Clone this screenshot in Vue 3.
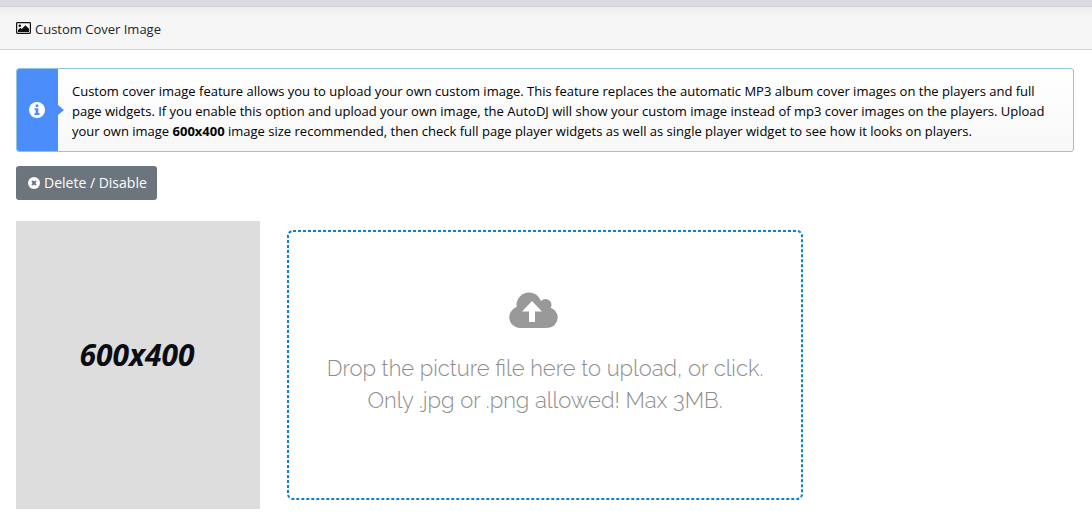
<script setup>
import { ref } from 'vue'

const picked = ref(null)
const onPick = (e) => {
  picked.value = e.target.files[0] || null
}
const onDrop = (e) => {
  picked.value = e.dataTransfer.files[0] || null
}
const clear = () => {
  picked.value = null
}
</script>

<template>
  <main class="panel">
    <header class="head">
      <svg class="head-icon" viewBox="0 0 15 12" aria-hidden="true">
        <rect x="0.6" y="0.6" width="13.8" height="10.8" rx="0.8" fill="none" stroke="currentColor" stroke-width="1.2" />
        <circle cx="3.8" cy="3.7" r="1.3" fill="currentColor" />
        <path d="M2 10V8L4.4 5.8L5.8 7.1L9.4 3.2L13 6.8V10Z" fill="currentColor" />
      </svg>
      <h1>Custom Cover Image</h1>
    </header>

    <section class="body">
      <div class="notice">
        <div class="notice-tab">
          <svg viewBox="0 0 16 16" aria-hidden="true">
            <circle cx="8" cy="8" r="8" fill="#fff" />
            <path d="M6.7 2.5H9.3V5H6.7ZM5.7 6.3H9.3V11H10.5V13H5.5V11H6.7V8.2H5.7Z" fill="#4b8dfb" />
          </svg>
        </div>
        <p>
          Custom cover image feature allows you to upload your own custom image. This feature replaces the automatic MP3 album cover images on the players and full<br />
          page widgets. If you enable this option and upload your own image, the AutoDJ will show your custom image instead of mp3 cover images on the players. Upload<br />
          your own image <b>600x400</b> image size recommended, then check full page player widgets as well as single player widget to see how it looks on players.
        </p>
      </div>

      <button type="button" class="delete" @click="clear">
        <svg viewBox="0 0 12 12" aria-hidden="true">
          <circle cx="6" cy="6" r="6" fill="#fff" />
          <path d="M4 4L8 8M8 4L4 8" stroke="#6c757d" stroke-width="1.8" />
        </svg>
        <span>Delete / Disable</span>
      </button>

      <div class="media">
        <div class="preview">600x400</div>
        <label class="drop" @dragover.prevent @drop.prevent="onDrop">
          <input type="file" accept=".jpg,.png" @change="onPick" />
          <svg class="outline" aria-hidden="true"><rect x="1" y="1" rx="5" /></svg>
          <svg class="cloud" viewBox="0 0 49 36" aria-hidden="true">
            <g fill="#999">
              <circle cx="20" cy="13" r="12.5" />
              <circle cx="36.5" cy="13" r="6" />
              <circle cx="11" cy="25.3" r="10.7" />
              <circle cx="38.3" cy="25.6" r="10.4" />
              <path d="M10 14H37V36H11Z" />
            </g>
            <path d="M23 9L33 19.5H26V30H20V19.5H13Z" fill="#fff" />
          </svg>
          <span>Drop the picture file here to upload, or click.</span>
          <span>Only .jpg or .png allowed! Max 3MB.</span>
        </label>
      </div>
    </section>
  </main>
</template>

<style>
body {
  margin: 0;
  background: #fff;
}
</style>

<style scoped>
.panel {
  border-top: 6px solid #dadbe0;
  font-family: "Open Sans", "Noto Sans", sans-serif;
  font-size: 13px;
  line-height: 20px;
  color: #111;
}
.head {
  display: flex;
  align-items: center;
  gap: 4px;
  height: 42px;
  padding: 0 16px;
  border-top: 1px solid #d0d0d0;
  border-bottom: 1px solid #d3d3d3;
  background: linear-gradient(#eeeeee, #f6f6f6 10px);
}
.head-icon {
  width: 15px;
  height: 12px;
}
h1 {
  margin: 0;
  padding-top: 2px;
  font-size: 13px;
  font-weight: 400;
  color: #212529;
}
.body {
  padding: 18px 18px 20px 16px;
}
.notice {
  display: flex;
  border: 1px solid #91c5de;
  border-radius: 3px;
  background: linear-gradient(#fff, #f8f8f8);
}
.notice-tab {
  position: relative;
  flex: 0 0 41px;
  display: flex;
  align-items: center;
  justify-content: center;
  box-sizing: border-box;
  padding-right: 2px;
  border-radius: 2px 0 0 2px;
  background: #4b8dfb;
}
.notice-tab::after {
  content: "";
  position: absolute;
  left: 100%;
  top: 50%;
  margin-top: -5px;
  border: 5px solid transparent;
  border-left: 6px solid #4b8dfb;
  border-right: 0;
}
.notice-tab svg {
  width: 16px;
  height: 16px;
}
.notice p {
  margin: 0;
  padding: 12px 0 10px 14px;
  color: #000;
  white-space: nowrap;
}
.delete {
  display: flex;
  align-items: center;
  gap: 4px;
  height: 34px;
  margin: 14px 0 21px;
  padding: 0 10px 0 12px;
  border: 0;
  border-radius: 3px;
  background: #6c757d;
  color: #fff;
  font: inherit;
  font-size: 14px;
  cursor: pointer;
}
.delete svg {
  width: 12px;
  height: 12px;
}
.media {
  display: grid;
  grid-template-columns: 244px minmax(0, 516px);
  gap: 27px;
  align-items: start;
}
.preview {
  display: flex;
  align-items: center;
  justify-content: center;
  aspect-ratio: 244 / 288;
  padding: 0 2px 20px 0;
  box-sizing: border-box;
  background: #ddd;
  color: #0a0c12;
  font-family: "Noto Sans", sans-serif;
  font-size: 30px;
  font-weight: 700;
  font-style: italic;
  line-height: 36px;
}
.drop {
  position: relative;
  display: flex;
  flex-direction: column;
  align-items: center;
  box-sizing: border-box;
  min-height: 270px;
  margin-top: 9px;
  padding: 62px 20px;
  color: #8c8c8c;
  font-family: Raleway, Lato, sans-serif;
  font-size: 22px;
  font-weight: 300;
  line-height: 32px;
  text-align: center;
  cursor: pointer;
}
.drop input {
  position: absolute;
  inset: 0;
  width: 100%;
  height: 100%;
  opacity: 0;
  cursor: pointer;
}
.outline {
  position: absolute;
  inset: 0;
  width: 100%;
  height: 100%;
  pointer-events: none;
}
.outline rect {
  width: calc(100% - 2px);
  height: calc(100% - 2px);
  fill: none;
  stroke: #0f7fd0;
  stroke-width: 2px;
  stroke-dasharray: 3 2;
}
.cloud {
  width: 49px;
  height: 36px;
  margin: 0 23px 24px 0;
}
</style>
